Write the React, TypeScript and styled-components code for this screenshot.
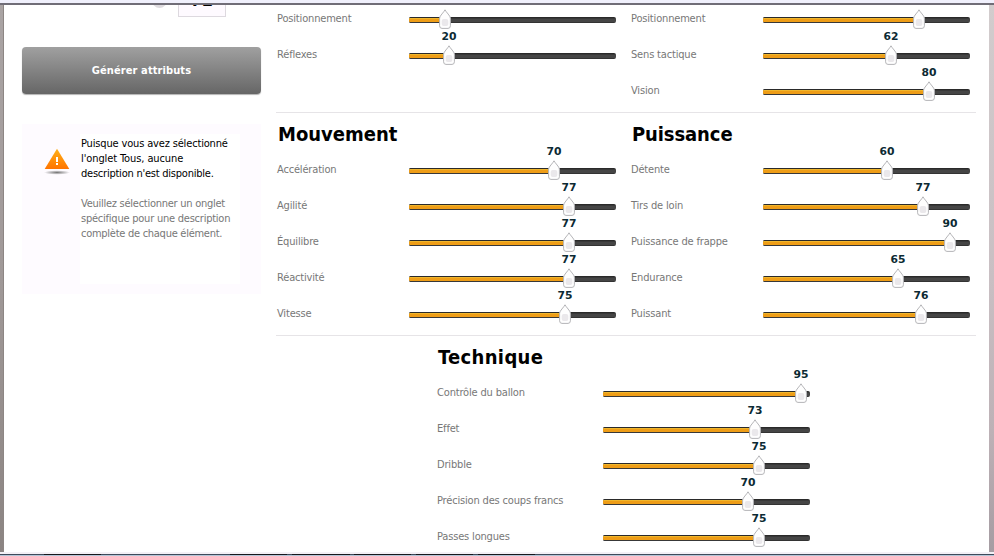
import React from "react";
import styled, { createGlobalStyle } from "styled-components";

const Global = createGlobalStyle`
  * { box-sizing: border-box; }
  body { margin: 0; overflow: hidden; background: #fff; }
`;
const Page = styled.div`
  width: 994px; height: 556px; overflow: hidden;
  display: flex; flex-direction: column; background: #fff;
  font: 11px/15px "DejaVu Sans Condensed", "DejaVu Sans", sans-serif;
  color: #777;
`;
const TopBar = styled.div`
  height: 5px; flex: none; z-index: 3; position: relative;
  background: #f0f0fc; border-bottom: 2px solid #706d77;
`;
const Body = styled.div`
  height: 547px; flex: none; display: flex; overflow: hidden;
`;
const Edge = styled.div<{ $w: number; $right?: boolean }>`
  width: ${p => p.$w}px; flex: none;
  background: ${p => p.$right
    ? "linear-gradient(#d2cccd, #c9bfc3 50%, #bdb1b6 78%, #a59ca2)"
    : "linear-gradient(#aaa4a4, #a09998 50%, #8b8482)"};
  ${p => (p.$right ? "" : "border-right: 1px solid #8d8684;")}
`;
const Sidebar = styled.aside`
  width: 272px; flex: none; padding-left: 18px;
`;
const AgeField = styled.div`
  display: flex; height: 42px; padding-left: 130px;
`;
const Dot = styled.div`
  width: 15px; height: 15px; margin: -12px 11px 0 0; border-radius: 50%; background: #dedbdf;
`;
const AgeBox = styled.div`
  width: 48px; height: 32px; margin-top: -20px; border: 1px solid #ddd9df; background: #fefaff;
  color: #000; font: bold 16px/20px "DejaVu Sans", sans-serif; text-align: center;
  padding-top: 5px;
`;
const Generate = styled.button`
  display: block; width: 239px; height: 47px; border: 0; border-radius: 4px; padding: 0;
  background: linear-gradient(#a0a0a0, #666); color: #fff;
  box-shadow: 0 1px 1px rgba(0,0,0,.3);
  font: bold 11px/15px "DejaVu Sans Condensed", sans-serif; letter-spacing: 0.1px;
`;
const Notice = styled.div`
  display: flex; width: 239px; height: 170px; margin-top: 30px; padding: 10px 21px;
  background: #fefbff;
`;
const NoticeIcon = styled.svg`width: 28px; height: 28px; margin: 13px 9px 0 0; flex: none;`;
const NoticeText = styled.div`
  width: 160px; flex: none; padding: 2px 0 0 1px; background: #fff; white-space: nowrap;
  p { margin: 0 0 15px; }
  p:first-child { color: #000; }
`;
const Line = styled.span<{ $ls: number }>`
  display: block; letter-spacing: ${p => p.$ls}px;
`;
const Main = styled.main`width: 700px; flex: none; margin-top: -5px;`;
const Gap = styled.div`flex: 1;`;
const Section = styled.section<{ $center?: boolean }>`
  display: flex; padding: 0 0 4px ${p => (p.$center ? 161 : 1)}px;
  & + & { border-top: 1px solid #e6e4e7; }
`;
const Group = styled.div<{ $label: number }>`
  width: ${p => p.$label + 222}px; flex: none; --label: ${p => p.$label}px;
`;
const Title = styled.h2<{ $ls: number }>`
  margin: 0; height: 38px; padding: 8px 0 0 1px; color: #000;
  font: bold 20px/26px "DejaVu Sans Condensed", sans-serif; letter-spacing: ${p => p.$ls}px;
`;
const Row = styled.div`display: flex; height: 36px; padding-top: 11px;`;
const Label = styled.span`
  width: var(--label); flex: none; white-space: nowrap; letter-spacing: -0.17px;
`;
const Track = styled.div`
  position: relative; width: 207px; height: 6px; flex: none; margin-top: 6px; border-radius: 2px;
  background: linear-gradient(#2a2a2a 0 1px, #383838 1px 2px, #454545 2px 5px, #333 5px);
`;
const Fill = styled.div`
  height: 6px; border-radius: 2px 0 0 2px;
  background: linear-gradient(#2a2a2a 0 1px, #f0b62c 1px 2px, #ee9d17 2px 5px, #383838 5px);
`;
const Marker = styled.div`
  position: absolute; top: -21px; width: 20px; margin-left: -10px; text-align: center;
  color: #0c2a33; font: bold 9.6px/10px "DejaVu Sans", sans-serif;
`;
const Value = styled.span`display: block; transform: scaleX(1.12);`;
const Handle = styled.svg`display: block; width: 12px; height: 20px; margin: 3px 0 0 4px;`;
const BottomBar = styled.svg`width: 994px; height: 4px; flex: none; display: block;`;

function Slider({ value }: { value: number }) {
  const x = Math.round(((value - 1) / 98) * 206.5 - 0.1);
  return (
    <Track>
      <Fill style={{ width: x }} />
      <Marker style={{ left: x }}>
        <Value>{value}</Value>
        <Handle viewBox="0 0 12 20">
          <path d="M6 .8 C7 3 11.4 7 11.4 9 V16.8 Q11.4 19.4 9 19.4 H3 Q.6 19.4 .6 16.8 V9 C.6 7 5 3 6 .8Z" fill="#fefefe" stroke="#b5b5b8" />
          <rect x="2.7" y="10" width="6.6" height="7" rx="2" fill="#eae8eb" />
        </Handle>
      </Marker>
    </Track>
  );
}

type Item = [string, number];
function Attributes({ title, items, label = 132, titleSpacing = 0 }: { title?: string; items: Item[]; label?: number; titleSpacing?: number }) {
  return (
    <Group $label={label}>
      {title && <Title $ls={titleSpacing}>{title}</Title>}
      {items.map(([name, value]) => (
        <Row key={name}><Label>{name}</Label><Slider value={value} /></Row>
      ))}
    </Group>
  );
}

export default function App() {
  return (
    <Page>
      <Global />
      <TopBar />
      <Body>
        <Edge $w={4} />
        <Sidebar>
          <AgeField><Dot /><AgeBox>72</AgeBox></AgeField>
          <Generate>Générer attributs</Generate>
          <Notice>
            <NoticeIcon viewBox="0 0 28 28">
              <defs>
                <linearGradient id="warn" x2="0" y2="1"><stop stopColor="#ffb018" /><stop offset="1" stopColor="#ff7400" /></linearGradient>
                <radialGradient id="shade"><stop stopColor="#777" /><stop offset="1" stopColor="#777" stopOpacity="0" /></radialGradient>
              </defs>
              <ellipse cx="14" cy="25.5" rx="13" ry="2.2" fill="url(#shade)" />
              <path d="M14 1.8 L26.3 22 H1.7Z" fill="url(#warn)" />
              <path d="M13 10h2v5h-2zM13 16h2v2h-2z" fill="#fff" />
            </NoticeIcon>
            <NoticeText>
              <p>
                <Line $ls={-0.16}>Puisque vous avez sélectionné</Line>
                <Line $ls={-0.1}>l'onglet Tous, aucune</Line>
                <Line $ls={-0.23}>description n'est disponible.</Line>
              </p>
              <p>
                <Line $ls={-0.26}>Veuillez sélectionner un onglet</Line>
                <Line $ls={-0.23}>spécifique pour une description</Line>
                <Line $ls={-0.27}>complète de chaque élément.</Line>
              </p>
            </NoticeText>
          </Notice>
        </Sidebar>
        <Main>
          <Section>
            <Attributes items={[["Positionnement", 18], ["Réflexes", 20]]} />
            <Attributes items={[["Positionnement", 75], ["Sens tactique", 62], ["Vision", 80]]} />
          </Section>
          <Section>
            <Attributes title="Mouvement" items={[["Accélération", 70], ["Agilité", 77], ["Équilibre", 77], ["Réactivité", 77], ["Vitesse", 75]]} />
            <Attributes title="Puissance" titleSpacing={-0.1} items={[["Détente", 60], ["Tirs de loin", 77], ["Puissance de frappe", 90], ["Endurance", 65], ["Puissant", 76]]} />
          </Section>
          <Section $center>
            <Attributes label={166} title="Technique" titleSpacing={0.35} items={[["Contrôle du ballon", 95], ["Effet", 73], ["Dribble", 75], ["Précision des coups francs", 70], ["Passes longues", 75]]} />
          </Section>
        </Main>
        <Gap />
        <Edge $w={5} $right />
      </Body>
      <BottomBar viewBox="0 0 994 4">
        <path d="M0 0H994V4H0Z" fill="#f3f0f6" />
        <path d="M0 2H994V3H0Z" fill="#3e4a5a" />
        <path d="M0 3H994V4H0Z" fill="#b4c4d6" />
        <path d="M44 2.5H101M230 2.5H287M292 2.5H350M354 2.5H411M416 2.5H473M478 2.5H535" stroke="#17171c" />
      </BottomBar>
    </Page>
  );
}
